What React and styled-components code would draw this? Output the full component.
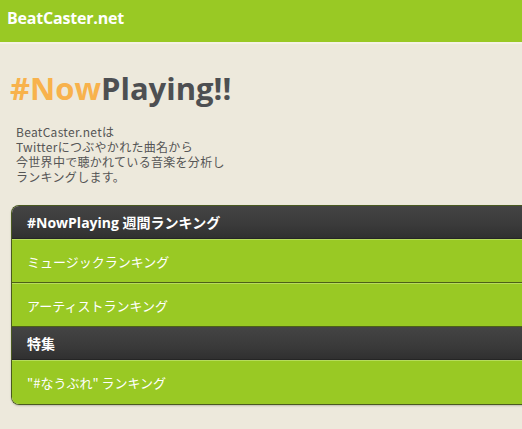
import React from "react";
import styled, { createGlobalStyle } from "styled-components";

const Global = createGlobalStyle`
  html, body { margin: 0; padding: 0; background: #ede9dc; }
  body { font-family: "Open Sans", "Noto Sans CJK JP", sans-serif; overflow: hidden; }
`;

const Page = styled.div`
  width: 522px;
  height: 429px;
  overflow: hidden;
  background: #ede9dc;
`;

const TopBar = styled.header`
  height: 44px;
  background: #99c924;
  border-bottom: 2px solid #f4f1e6;
  display: flex;
  align-items: center;
  padding-left: 7px;
  box-sizing: border-box;
`;

const Brand = styled.div`
  color: #fff;
  font-family: "Open Sans", sans-serif;
  font-weight: 700;
  font-size: 16px;
  letter-spacing: -0.2px;
  margin-top: -6px;
`;

const Main = styled.main`
  padding: 24px 0 0 11px;
`;

const Title = styled.h1`
  margin: 0 0 0 -1px;
  font-family: "Open Sans", sans-serif;
  font-weight: 700;
  font-size: 31px;
  line-height: 40px;
  letter-spacing: 0;
  color: #4d4f52;
`;

const Accent = styled.span`
  color: #f8b24c;
`;

const Desc = styled.p`
  margin: 16px 0 0 5px;
  font-family: "Noto Sans CJK JP", sans-serif;
  font-size: 12px;
  line-height: 15px;
  letter-spacing: 0.3px;
  color: #555;
`;

const Line = styled.span`
  display: block;
  height: 15px;
`;

const List = styled.div`
  margin-top: 21px;
  width: 540px;
  border-radius: 8px;
  overflow: hidden;
  border: 1px solid #4a5a20;
  border-right: none;
  box-shadow: 0 1px 2px rgba(0,0,0,0.2);
`;

const Divider = styled.div`
  height: 33px;
  background: linear-gradient(#444 0%, #3a3a3a 60%, #303030 100%);
  border-bottom: 1px solid #252525;
  display: flex;
  align-items: center;
  padding-left: 15px;
  color: #fff;
  font-family: "Open Sans", "Noto Sans CJK JP", sans-serif;
  font-weight: 700;
  font-size: 14px;
  box-sizing: border-box;
`;

const Row = styled.div`
  height: 44px;
  background: #99c924;
  border-top: 1px solid #b6dc5c;
  border-bottom: ${p => (p.$last ? "none" : "1px solid #4d6018")};
  display: flex;
  align-items: center;
  padding-left: 15px;
  color: #fff;
  font-family: "Noto Sans CJK JP", sans-serif;
  font-size: 13px;
  box-sizing: border-box;
`;

export default function App() {
  return (
    <Page>
      <Global />
      <TopBar>
        <Brand>BeatCaster.net</Brand>
      </TopBar>
      <Main>
        <Title>
          <Accent>#Now</Accent>Playing!!
        </Title>
        <Desc>
          <Line>BeatCaster.netは</Line>
          <Line>Twitterにつぶやかれた曲名から</Line>
          <Line>今世界中で聴かれている音楽を分析し</Line>
          <Line>ランキングします。</Line>
        </Desc>
        <List>
          <Divider>#NowPlaying 週間ランキング</Divider>
          <Row>ミュージックランキング</Row>
          <Row>アーティストランキング</Row>
          <Divider>特集</Divider>
          <Row $last>"#なうぶれ" ランキング</Row>
        </List>
      </Main>
    </Page>
  );
}
